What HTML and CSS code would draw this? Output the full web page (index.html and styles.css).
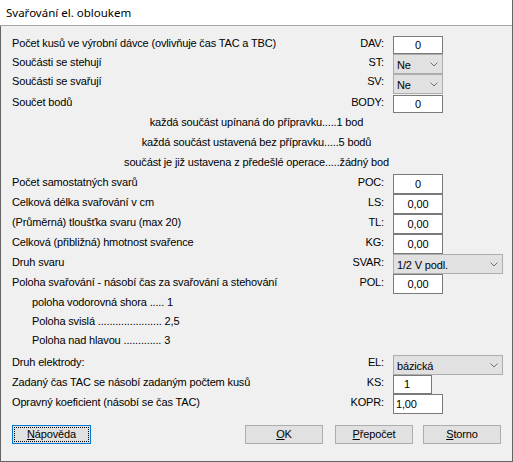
FILE: index.html
```html
<!DOCTYPE html>
<html lang="cs">
<head>
<meta charset="utf-8">
<title>Svařování el. obloukem</title>
<link rel="stylesheet" href="styles.css">
</head>
<body>
<div class="win">
  <div class="titlebar">Svařování el. obloukem</div>
  <div class="client">
    <div class="row r-dav">
      <span class="lbl">Počet kusů ve výrobní dávce (ovlivňuje čas TAC a TBC)</span>
      <span class="code">DAV:</span>
      <span class="fcol"><span class="edit w50 center">0</span></span>
    </div>
    <div class="row r-st">
      <span class="lbl">Součásti se stehují</span>
      <span class="code">ST:</span>
      <span class="fcol"><span class="combo w50"><span class="ctext">Ne</span><svg class="chev" width="8" height="5" viewBox="0 0 8 5"><polyline points="0.5,0.5 4,4 7.5,0.5" fill="none" stroke="#707070" stroke-width="1"/></svg></span></span>
    </div>
    <div class="row r-sv">
      <span class="lbl">Součásti se svařují</span>
      <span class="code">SV:</span>
      <span class="fcol"><span class="combo w50"><span class="ctext">Ne</span><svg class="chev" width="8" height="5" viewBox="0 0 8 5"><polyline points="0.5,0.5 4,4 7.5,0.5" fill="none" stroke="#707070" stroke-width="1"/></svg></span></span>
    </div>
    <div class="row r-body">
      <span class="lbl">Součet bodů</span>
      <span class="code">BODY:</span>
      <span class="fcol"><span class="edit w50 center">0</span></span>
    </div>
    <div class="notes">
      <div>každá součást upínaná do přípravku.....1 bod</div>
      <div>každá součást ustavená bez přípravku.....5 bodů</div>
      <div>součást je již ustavena z předešlé operace.....žádný bod</div>
    </div>
    <div class="row r-poc">
      <span class="lbl">Počet samostatných svarů</span>
      <span class="code">POC:</span>
      <span class="fcol"><span class="edit w50 center">0</span></span>
    </div>
    <div class="row r-std">
      <span class="lbl">Celková délka svařování v cm</span>
      <span class="code">LS:</span>
      <span class="fcol"><span class="edit w50 center">0,00</span></span>
    </div>
    <div class="row r-std">
      <span class="lbl">(Průměrná) tloušťka svaru (max 20)</span>
      <span class="code">TL:</span>
      <span class="fcol"><span class="edit w50 center">0,00</span></span>
    </div>
    <div class="row r-std">
      <span class="lbl">Celková (přibližná) hmotnost svařence</span>
      <span class="code">KG:</span>
      <span class="fcol"><span class="edit w50 center">0,00</span></span>
    </div>
    <div class="row r-std">
      <span class="lbl">Druh svaru</span>
      <span class="code">SVAR:</span>
      <span class="fcol"><span class="combo w110"><span class="ctext">1/2 V podl.</span><svg class="chev" width="8" height="5" viewBox="0 0 8 5"><polyline points="0.5,0.5 4,4 7.5,0.5" fill="none" stroke="#707070" stroke-width="1"/></svg></span></span>
    </div>
    <div class="row r-std">
      <span class="lbl">Poloha svařování - násobí čas za svařování a stehování</span>
      <span class="code">POL:</span>
      <span class="fcol"><span class="edit w50 center">0,00</span></span>
    </div>
    <div class="positions">
      <div>poloha vodorovná shora ..... 1</div>
      <div>Poloha svislá ...................... 2,5</div>
      <div>Poloha nad hlavou ............. 3</div>
    </div>
    <div class="row r-el">
      <span class="lbl">Druh elektrody:</span>
      <span class="code">EL:</span>
      <span class="fcol"><span class="combo w110"><span class="ctext">bázická</span><svg class="chev" width="8" height="5" viewBox="0 0 8 5"><polyline points="0.5,0.5 4,4 7.5,0.5" fill="none" stroke="#707070" stroke-width="1"/></svg></span></span>
    </div>
    <div class="row r-ks">
      <span class="lbl">Zadaný čas TAC se násobí zadaným počtem kusů</span>
      <span class="code">KS:</span>
      <span class="fcol"><span class="edit w39 pad10">1</span></span>
    </div>
    <div class="row r-kopr">
      <span class="lbl">Opravný koeficient (násobí se čas TAC)</span>
      <span class="code">KOPR:</span>
      <span class="fcol"><span class="edit w50 pad2">1,00</span></span>
    </div>
    <div class="buttons">
      <span class="btn btn-help focused"><span class="focusrect"><u>N</u>ápověda</span></span>
      <span class="btn btn-ok"><u>O</u>K</span>
      <span class="btn btn-calc"><u>P</u>řepočet</span>
      <span class="btn btn-cancel"><u>S</u>torno</span>
    </div>
  </div>
</div>
</body>
</html>
```
FILE: styles.css
```css
html, body {
  margin: 0;
  padding: 0;
  background: #f0f0f0;
  overflow: hidden;
}

.win {
  width: 513px;
  height: 462px;
  box-sizing: border-box;
  border-right: 1px solid #646464;
  background: #f0f0f0;
  display: flex;
  flex-direction: column;
  font-family: "Liberation Sans", Arial, sans-serif;
  font-size: 11px;
  letter-spacing: -0.15px;
  color: #000;
}

.titlebar {
  height: 25px;
  flex: none;
  background: #fff;
  border-bottom: 1px solid #a6a6a6;
  padding-left: 6px;
  font-family: "Noto Sans", "Open Sans", sans-serif;
  font-size: 11.5px;
  letter-spacing: 0;
  line-height: 25px;
}

.client {
  flex: 1;
  border-left: 1px solid #646464;
  border-bottom: 1px solid #646464;
  padding: 10px 0 0 11px;
}

.row {
  display: flex;
  align-items: flex-start;
}

.lbl {
  flex: 1;
  line-height: 14px;
  white-space: nowrap;
}

.code {
  line-height: 14px;
  margin-right: 9px;
  text-align: right;
}

.fcol {
  width: 119px;
  flex: none;
  display: flex;
}

.edit {
  box-sizing: border-box;
  height: 18px;
  background: #fff;
  border: 1px solid #7a7a7a;
  line-height: 16px;
  white-space: nowrap;
}

.combo {
  box-sizing: border-box;
  height: 20px;
  background: #e1e1e1;
  border: 1px solid #adadad;
  display: flex;
  align-items: center;
  justify-content: space-between;
  padding: 1px 4px 0 3px;
}

.ctext {
  line-height: 16px;
}

.chev {
  display: block;
}

.w50 { width: 50px; }
.w39 { width: 39px; }
.w110 { width: 110px; }
.center { text-align: center; }
.pad10 { padding-left: 10px; }
.pad2 { padding-left: 2px; }

.r-st .lbl, .r-st .code { padding-top: 1px; }
.r-body { margin-top: 1px; }

.notes {
  margin-top: -1px;
  margin-right: 11px;
  text-align: center;
  line-height: 20px;
}

.r-poc { margin-top: 2px; }
.r-poc .edit, .r-std .edit { height: 20px; line-height: 18px; }
.r-poc .lbl, .r-poc .code,
.r-std .lbl, .r-std .code { padding-top: 1px; }

.positions {
  margin-top: -1px;
  padding-left: 20px;
  line-height: 19px;
}

.r-el { margin-top: 5px; }
.r-ks .edit { height: 19px; line-height: 17px; }
.r-kopr .edit { height: 20px; line-height: 18px; }
.r-kopr .lbl, .r-kopr .code { padding-top: 1px; }

.buttons {
  display: flex;
  margin-top: 11px;
}

.btn {
  box-sizing: border-box;
  height: 19px;
  width: 78px;
  background: #e1e1e1;
  border: 1px solid #adadad;
  text-align: center;
  line-height: 17px;
}

.btn-help {
  width: 79px;
  border: 1px solid #0078d7;
  padding: 1px;
}

.focusrect {
  display: block;
  height: 15px;
  box-sizing: border-box;
  border: 1px dotted #000;
  line-height: 13px;
}

.btn-ok { margin-left: 154px; }
.btn-calc { margin-left: 12px; }
.btn-cancel { margin-left: 10px; }

u {
  text-decoration: underline;
  text-underline-offset: 1px;
}
```
